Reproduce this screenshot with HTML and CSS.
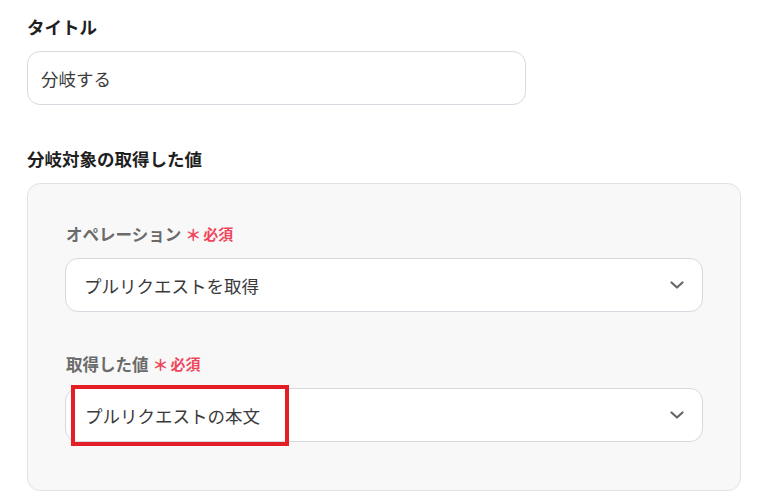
FILE: index.html
```html
<!DOCTYPE html>
<html lang="ja">
<head>
<meta charset="utf-8">
<link rel="stylesheet" href="styles.css">
</head>
<body>
<div class="page">
  <div class="label">タイトル</div>
  <div class="input">分岐する</div>

  <div class="label label-gap">分岐対象の取得した値</div>
  <div class="panel">
    <div class="field-label">オペレーション<span class="req"><span class="ast">＊</span>必須</span></div>
    <div class="select">
      <span>プルリクエストを取得</span>
      <svg class="chev" width="14" height="8" viewBox="0 0 14 8"><path d="M1.5 1.5 L7 6.5 L12.5 1.5" fill="none" stroke="#666" stroke-width="2.2" stroke-linecap="round" stroke-linejoin="round"/></svg>
    </div>
    <div class="field-label field-gap">取得した値<span class="req"><span class="ast">＊</span>必須</span></div>
    <div class="select highlight-host">
      <span class="val2">プルリクエストの本文</span>
      <svg class="chev" width="14" height="8" viewBox="0 0 14 8"><path d="M1.5 1.5 L7 6.5 L12.5 1.5" fill="none" stroke="#666" stroke-width="2.2" stroke-linecap="round" stroke-linejoin="round"/></svg>
      <div class="highlight"></div>
    </div>
  </div>
</div>
</body>
</html>
```
FILE: styles.css
```css
* { box-sizing: border-box; }
html, body { margin: 0; padding: 0; background: #fff; }
body {
  font-family: "Noto Sans CJK JP", "Noto Sans", sans-serif;
  color: #333;
}
.page {
  padding: 15px 27px 0 27px;
}
.label {
  font-size: 17.5px;
  font-weight: 700;
  line-height: 24px;
  color: #1f1f1f;
  margin-bottom: 12px;
}
.label-gap { margin-top: 42px; }
.input {
  width: 499px;
  height: 54px;
  border: 1px solid #d6d9df;
  border-radius: 13px;
  display: flex;
  align-items: center;
  padding-left: 13px;
  font-size: 17.5px;
  color: #3a3a3a;
}
.panel {
  width: 714px;
  height: 308px;
  background: #f8f8f8;
  border: 1px solid #e2e2e2;
  border-radius: 13px;
  padding: 38px 37px 0 37px;
}
.field-label {
  font-size: 16.5px;
  font-weight: 700;
  line-height: 24px;
  color: #6b6b6b;
  margin-bottom: 12px;
  padding-left: 1px;
  display: flex;
  align-items: center;
}
.field-gap { margin-top: 40px; }
.req {
  color: #f0465c;
  font-size: 15px;
  font-weight: 700;
  margin-left: 4px;
  display: inline-flex;
  align-items: center;
}
.ast { font-size: 16px; margin-right: 2px; }
.select {
  position: relative;
  height: 54px;
  background: #fff;
  border: 1px solid #d6d9df;
  border-radius: 13px;
  display: flex;
  align-items: center;
  justify-content: space-between;
  padding: 0 18px 0 18px;
  font-size: 17.5px;
  color: #3a3a3a;
}
.val2 { padding-left: 1px; }
.chev { display: block; }
.highlight {
  position: absolute;
  left: 5px;
  top: -4px;
  width: 218px;
  height: 61px;
  border: 4px solid #e41e26;
  pointer-events: none;
}
```
